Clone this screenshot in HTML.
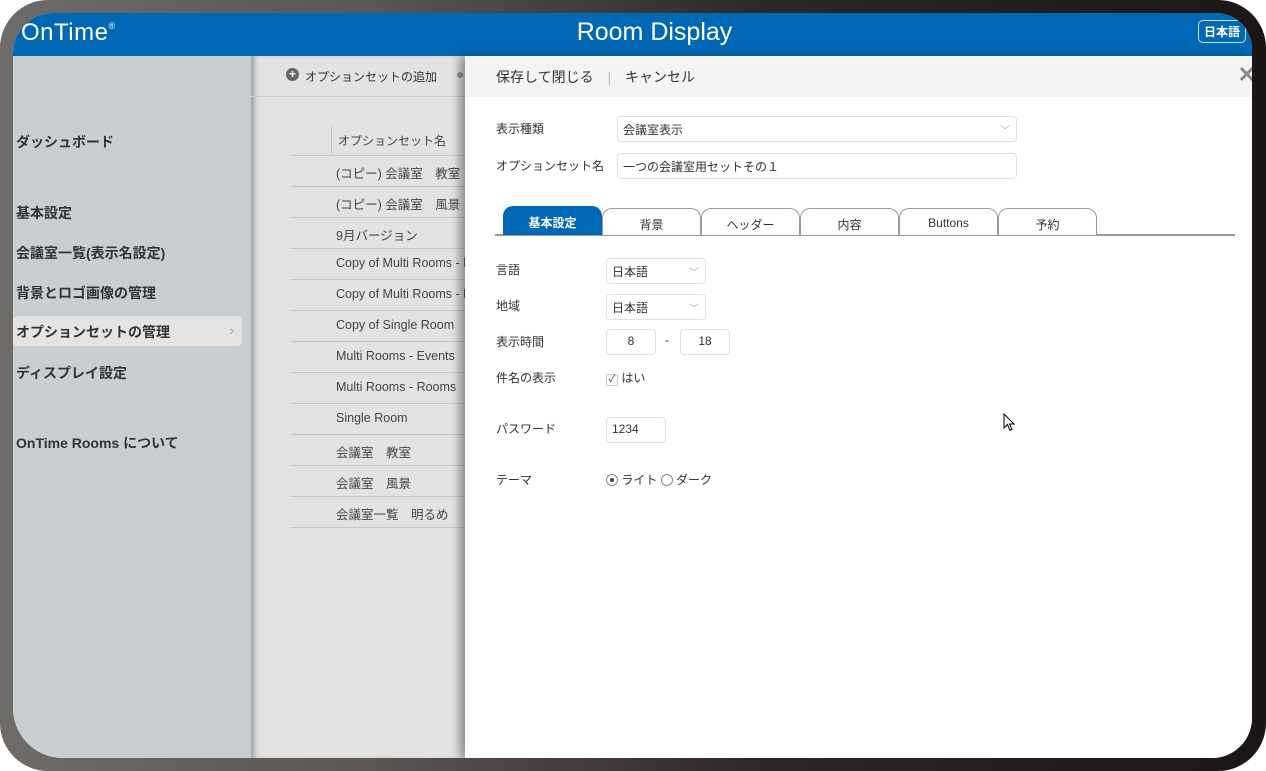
<!DOCTYPE html>
<html><head><meta charset="utf-8"><style>
*{box-sizing:border-box;margin:0;padding:0}
body{width:1266px;height:771px;background:#fff;overflow:hidden;font-family:"Liberation Sans","Noto Sans CJK JP",sans-serif;position:relative}
.frame{position:absolute;left:0;top:0;width:1266px;height:771px;border-radius:48px;background:linear-gradient(90deg,#6e6b69 0%,#5a5553 30%,#2d2727 60%,#1b1515 100%)}
.scr{position:absolute;left:13px;top:13px;width:1239px;height:745px;border-radius:40px 36px 40px 50px;overflow:hidden;background:#fff}
.hdr{position:absolute;left:0;top:0;width:100%;height:43px;background:#0068b4}
.logo{position:absolute;left:8px;top:6px;color:#fff;font-size:24px;letter-spacing:.5px}
.logo sup{font-size:9px;vertical-align:top;position:relative;top:2px}
.title{position:absolute;left:22px;width:1239px;top:5px;text-align:center;color:#fff;font-size:25px}
.lang{position:absolute;right:6px;top:7px;border:1px solid #cfe0ee;border-radius:5px;color:#fff;font-size:12px;font-weight:bold;padding:2px 5px}
.side{position:absolute;left:0;top:43px;width:238px;height:702px;background:#c9ced2}
.side div{position:absolute;left:3px;font-size:14px;font-weight:bold;color:#333}
.sel{background:#e4e4e4;width:229px;height:30px;border-radius:4px;left:0 !important;padding:6px 0 0 3px}
.mid{position:absolute;left:238px;top:43px;width:214px;height:702px;background:#e3e3e3;box-shadow:inset 6px 0 6px -3px #999}
.tb{position:absolute;left:0;top:0;width:100%;height:41px;border-bottom:1px solid #ccc;font-size:12px;color:#333}
.row{position:absolute;left:40px;width:180px;height:31px;border-bottom:1px solid #c6c6c6;font-size:12.5px;color:#444;padding:7px 0 0 45px;white-space:nowrap;overflow:hidden}
.right{position:absolute;left:452px;top:43px;width:787px;height:702px;background:#fff;box-shadow:-6px 0 8px rgba(0,0,0,.35)}
.rtb{height:41px;background:#f4f4f4;font-size:14px;color:#333;padding:11px 0 0 31px}
.lbl{position:absolute;font-size:12px;color:#333}
.inp{position:absolute;border:1px solid #dde1e6;border-radius:4px;font-size:12px;color:#333;padding:4px 5px;height:26px;background:#fff}
.chev{position:absolute;right:6px;top:5px;color:#aaa;font-size:10px}
.tabs{position:absolute;left:30px;top:152px;width:740px;height:28px;border-bottom:2px solid #999}
.tab{position:absolute;top:0;width:99px;height:27px;border:1px solid #999;border-bottom:none;border-radius:10px 10px 0 0;text-align:center;font-size:12px;color:#333;padding-top:7px;background:#fff}
.tab.on{background:#0068b4;color:#fff;font-weight:bold;border-color:#0068b4;top:-2px;height:29px}
</style></head><body>
<div class="frame"></div>
<div class="scr">
<div class="hdr"><div class="logo">OnTime<sup>®</sup></div><div class="title">Room Display</div><div class="lang">日本語</div></div>
<div class="side">
<div style="top:76px">ダッシュボード</div>
<div style="top:147px">基本設定</div>
<div style="top:187px">会議室一覧(表示名設定)</div>
<div style="top:227px">背景とロゴ画像の管理</div>
<div class="sel" style="top:260px">オプションセットの管理<span style="position:absolute;right:8px;color:#aaa;font-weight:normal">›</span></div>
<div style="top:307px">ディスプレイ設定</div>
<div style="top:377px">OnTime Rooms について</div>
</div>
<div class="mid">
<div class="tb"><span style="position:absolute;left:35px;top:12px;width:13px;height:13px;border-radius:50%;background:#666;color:#fff;font-size:12px;line-height:12px;text-align:center;font-weight:bold">+</span><span style="position:absolute;left:54px;top:12px">オプションセットの追加</span><span style="position:absolute;left:206px;top:16px;width:6px;height:6px;border-radius:50%;background:#999"></span></div>
<div style="position:absolute;left:80px;top:70px;height:30px;border-left:1px solid #c6c6c6"></div>
<div class="row" style="top:69px;padding-left:47px;font-size:12px">オプションセット名</div>
<div class="row" style="top:100px">(コピー) 会議室　教室</div>
<div class="row" style="top:131px">(コピー) 会議室　風景</div>
<div class="row" style="top:162px">9月バージョン</div>
<div class="row" style="top:193px">Copy of Multi Rooms - E</div>
<div class="row" style="top:224px">Copy of Multi Rooms - R</div>
<div class="row" style="top:255px">Copy of Single Room</div>
<div class="row" style="top:286px">Multi Rooms - Events</div>
<div class="row" style="top:317px">Multi Rooms - Rooms</div>
<div class="row" style="top:348px">Single Room</div>
<div class="row" style="top:379px">会議室　教室</div>
<div class="row" style="top:410px">会議室　風景</div>
<div class="row" style="top:441px">会議室一覧　明るめ</div>
</div>
<div class="right">
<div class="rtb">保存して閉じる <span style="color:#bbb;margin:0 10px">|</span> キャンセル<span style="position:absolute;right:-4px;top:6px;font-size:22px;color:#888;font-weight:bold">✕</span></div>
<div class="lbl" style="left:31px;top:64px">表示種類</div>
<div class="inp" style="left:152px;top:60px;width:400px">会議室表示<span class="chev">﹀</span></div>
<div class="lbl" style="left:31px;top:101px">オプションセット名</div>
<div class="inp" style="left:152px;top:97px;width:400px">一つの会議室用セットその１</div>
<div class="tabs">
<div class="tab on" style="left:8px">基本設定</div>
<div class="tab" style="left:107px">背景</div>
<div class="tab" style="left:206px">ヘッダー</div>
<div class="tab" style="left:305px">内容</div>
<div class="tab" style="left:404px">Buttons</div>
<div class="tab" style="left:503px">予約</div>
</div>
<div class="lbl" style="left:31px;top:205px">言語</div>
<div class="inp" style="left:141px;top:202px;width:100px">日本語<span class="chev">﹀</span></div>
<div class="lbl" style="left:31px;top:241px">地域</div>
<div class="inp" style="left:141px;top:238px;width:100px">日本語<span class="chev">﹀</span></div>
<div class="lbl" style="left:31px;top:277px">表示時間</div>
<div class="inp" style="left:141px;top:273px;width:50px;text-align:center">8</div>
<div class="lbl" style="left:200px;top:277px">-</div>
<div class="inp" style="left:215px;top:273px;width:50px;text-align:center">18</div>
<div class="lbl" style="left:31px;top:313px">件名の表示</div>
<div class="lbl" style="left:141px;top:313px"><span style="display:inline-block;width:12px;height:12px;border:1px solid #ccc;border-radius:2px;font-size:10px;line-height:10px;text-align:center">✓</span> はい</div>
<div class="lbl" style="left:31px;top:364px">パスワード</div>
<div class="inp" style="left:141px;top:361px;width:60px">1234</div>
<div class="lbl" style="left:31px;top:415px">テーマ</div>
<div class="lbl" style="left:141px;top:415px"><span style="display:inline-block;width:12px;height:12px;border:1px solid #888;border-radius:50%;vertical-align:-2px;position:relative"><span style="position:absolute;left:3px;top:3px;width:4px;height:4px;border-radius:50%;background:#444"></span></span> ライト <span style="display:inline-block;width:12px;height:12px;border:1px solid #888;border-radius:50%;vertical-align:-2px"></span> ダーク</div>
<svg style="position:absolute;left:538px;top:357px" width="14" height="20" viewBox="0 0 14 20"><path d="M1 1 L1 15 L4.5 11.5 L7 17.5 L9 16.5 L6.5 11 L11 11 Z" fill="#fff" stroke="#000" stroke-width="1"/></svg>
</div>
</div>
</body></html>
